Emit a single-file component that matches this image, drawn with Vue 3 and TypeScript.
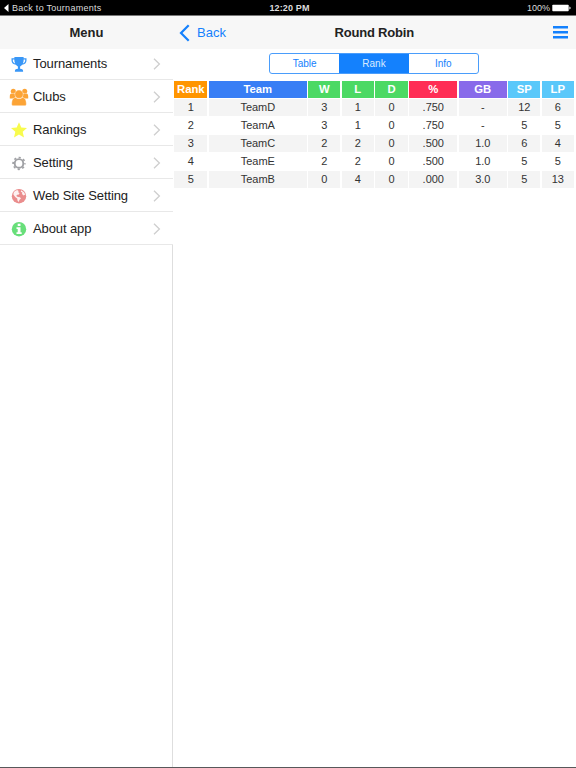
<script setup lang="ts">
interface MenuItem {
  icon: string
  label: string
}

const menu: MenuItem[] = [
  { icon: 'trophy', label: 'Tournaments' },
  { icon: 'clubs', label: 'Clubs' },
  { icon: 'star', label: 'Rankings' },
  { icon: 'gear', label: 'Setting' },
  { icon: 'globe', label: 'Web Site Setting' },
  { icon: 'info', label: 'About app' },
]

const tabs: string[] = ['Table', 'Rank', 'Info']
const activeTab = 'Rank'

const columns: { label: string; tone: string }[] = [
  { label: 'Rank', tone: 'orange' },
  { label: 'Team', tone: 'blue' },
  { label: 'W', tone: 'green' },
  { label: 'L', tone: 'green' },
  { label: 'D', tone: 'green' },
  { label: '%', tone: 'red' },
  { label: 'GB', tone: 'purple' },
  { label: 'SP', tone: 'sky' },
  { label: 'LP', tone: 'sky' },
]

const rows: string[][] = [
  ['1', 'TeamD', '3', '1', '0', '.750', '-', '12', '6'],
  ['2', 'TeamA', '3', '1', '0', '.750', '-', '5', '5'],
  ['3', 'TeamC', '2', '2', '0', '.500', '1.0', '6', '4'],
  ['4', 'TeamE', '2', '2', '0', '.500', '1.0', '5', '5'],
  ['5', 'TeamB', '0', '4', '0', '.000', '3.0', '5', '13'],
]
</script>

<template>
  <div class="screen">
    <header class="status">
      <div class="status-left">
        <svg class="back-mark" viewBox="0 0 5 8"><path d="M4.5 0v8L0 4z" fill="#fff" /></svg>
        <span>Back to Tournaments</span>
      </div>
      <div class="status-time">12:20 PM</div>
      <div class="status-right">
        <span>100%</span>
        <svg class="battery" viewBox="0 0 19 8">
          <rect x="0.3" y="0.8" width="16.4" height="6.4" rx="0.8" fill="#fff" />
          <path d="M17.4 2.6q1.2.3 1.2 1.4t-1.2 1.4z" fill="#fff" />
        </svg>
      </div>
    </header>

    <div class="body">
      <aside class="sidebar">
        <div class="nav nav-menu">Menu</div>
        <ul class="menu">
          <li v-for="item in menu" :key="item.label" class="menu-item">
            <svg v-if="item.icon === 'trophy'" class="icon" viewBox="0 0 20 20">
              <path d="M5.4 3h9.2v1.3h2.9v2.2c0 2.3-1.8 4-4.4 4.3-.6.9-1.3 1.4-2 1.7v2.2c1.8 0 3 .8 3 2.4v.6H5.9v-.6c0-1.6 1.2-2.4 3-2.4v-2.2c-.7-.3-1.4-.8-2-1.7C4.300 10.500 2.500 8.800 2.500 6.500V4.300h2.900z" fill="#3997f7" />
              <path d="M5.300 5.500H3.800v1c0 1.300.9 2.500 2.300 2.900-.5-1.100-.8-2.400-.8-3.900zM14.700 5.500h1.500v1c0 1.300-.9 2.500-2.300 2.900.5-1.100.8-2.400.8-3.900z" fill="#fff" />
            </svg>
            <svg v-else-if="item.icon === 'clubs'" class="icon" viewBox="0 0 20 20">
              <g fill="#fca436">
                <circle cx="4.300" cy="4.200" r="2.500" />
                <circle cx="15.700" cy="4.200" r="2.500" />
                <path d="M.8 11.400V9.200C.8 7.600 1.500 6.800 2.600 6.500q1.700 1 3.200.2l1 3.300-1.400 1.400z" />
                <path d="M19.200 11.400V9.200c0-1.600-.7-2.400-1.800-2.700q-1.700 1-3.200.2l-1 3.300 1.400 1.400z" />
              </g>
              <g fill="#fca436" stroke="#fff" stroke-width=".4">
                <path d="M3.600 18.700c-1-.5-1-1.400-.9-2.700.1-3 1.200-5.100 3.600-5.600q3.700 2.700 7.400 0c2.400.5 3.500 2.600 3.600 5.600.1 1.300.1 2.200-.9 2.700z" />
                <circle cx="10" cy="7.200" r="4.200" />
              </g>
            </svg>
            <svg v-else-if="item.icon === 'star'" class="icon" viewBox="0 0 20 20">
              <path d="M10 2.200l2.300 5.300 5.700.5-4.300 3.800 1.300 5.700-5-3-5 3 1.300-5.700L2 8l5.700-.5z" fill="#f8fb4d" />
            </svg>
            <svg v-else-if="item.icon === 'gear'" class="icon" viewBox="0 0 20 20">
              <circle cx="10" cy="10.400" r="4.300" fill="none" stroke="#a0a1a5" stroke-width="1.900" />
              <circle cx="10" cy="10.400" r="5.900" fill="none" stroke="#a0a1a5" stroke-width="1.700" stroke-dasharray="2.200 2.434" stroke-dashoffset="1.100" />
            </svg>
            <svg v-else-if="item.icon === 'globe'" class="icon" viewBox="0 0 20 20">
              <circle cx="10" cy="10.200" r="7.200" fill="#ea8d8d" />
              <path d="M6 5l2.200-.9 1.400 1-.4 1.200 1.300.8-.6 1.300-1.700.3-1 1.200 1.800 1 2 .3 1 1.200-1.500 1.400-.8 2.200-1.100-1.200-.4-2.200-2-1.600-1.800-2.500.3-1.900zM12.100 4.300l2.900 1.900 1.200 2.300-1.600 1-1.600-1.500.3-1.500-1.500-.8z" fill="#fff" opacity=".88" />
            </svg>
            <svg v-else class="icon" viewBox="0 0 20 20">
              <circle cx="10" cy="10.200" r="7.200" fill="#68df7a" />
              <path d="M8.700 4.700h2.800V7H8.700zM7.500 8.300h4v4.900h1.200v1.700H7.500v-1.700h1.200V10H7.500z" fill="#fff" />
            </svg>
            <span class="menu-label">{{ item.label }}</span>
            <svg class="chevron" viewBox="0 0 8 12"><path d="M1 .8L6.400 6 1 11.200" fill="none" stroke="#cecece" stroke-width="1.300" /></svg>
          </li>
        </ul>
        <div class="sidebar-rest"></div>
      </aside>

      <main class="content">
        <div class="nav nav-main">
          <div class="back">
            <svg class="back-arrow" viewBox="0 0 11 18"><path d="M9.700 1.200L2 9l7.700 7.800" fill="none" stroke="#1481fd" stroke-width="2.200" /></svg>
            <span>Back</span>
          </div>
          <div class="title">Round Robin</div>
          <div class="nav-right">
            <svg class="burger" viewBox="0 0 15 13"><path d="M0 0h15v2.500H0zM0 5h15v2.500H0zM0 10h15v2.500H0z" fill="#1481fd" /></svg>
          </div>
        </div>
        <div class="segmented">
          <div v-for="tab in tabs" :key="tab" class="segment" :class="{ active: tab === activeTab }">{{ tab }}</div>
        </div>
        <div class="grid">
          <div v-for="col in columns" :key="col.label" class="head" :class="col.tone">{{ col.label }}</div>
          <template v-for="(row, r) in rows" :key="r">
            <div v-for="(cell, c) in row" :key="c" class="cell" :class="{ shaded: r % 2 === 0 }">{{ cell }}</div>
          </template>
        </div>
      </main>
    </div>
  </div>
</template>

<style>
body {
  background: #fff;
}
</style>

<style scoped>
.screen {
  box-sizing: border-box;
  width: 576px;
  height: 768px;
  display: flex;
  flex-direction: column;
  overflow: hidden;
  background: #fff;
  border-bottom: 1px solid #58585a;
  font-family: "Liberation Sans", Arial, sans-serif;
  color: #222;
}
.status {
  flex: none;
  display: grid;
  grid-template-columns: 1fr auto 1fr;
  align-items: center;
  height: 15px;
  padding: 0 5px 0 4px;
  border-bottom: 1px solid #777;
  background: #000;
  color: #ddd;
  font-size: 9px;
  line-height: 15px;
}
.status-left {
  display: flex;
  align-items: center;
  gap: 3px;
  letter-spacing: 0.27px;
}
.back-mark {
  width: 5px;
  height: 8px;
}
.status-time {
  font-weight: bold;
  letter-spacing: 0.15px;
  padding: 1px 0 0 4px;
}
.status-right {
  display: flex;
  justify-content: flex-end;
  align-items: center;
  gap: 2px;
}
.battery {
  width: 19px;
  height: 8px;
}
.body {
  flex: 1;
  display: flex;
  min-height: 0;
}
.sidebar {
  width: 173px;
  display: flex;
  flex-direction: column;
}
.nav {
  flex: none;
  height: 33px;
  background: #f7f7f7;
  font-size: 13px;
  line-height: 33px;
}
.nav-menu {
  text-align: center;
  font-weight: bold;
}
.menu {
  list-style: none;
  margin: 0;
  padding: 0;
}
.menu-item {
  box-sizing: border-box;
  display: flex;
  align-items: center;
  height: 33px;
  padding: 2px 12px 0 9px;
  border-bottom: 1px solid #e8e8e8;
}
.menu-item:first-child {
  height: 31px;
  padding-top: 0;
}
.icon {
  width: 20px;
  height: 20px;
}
.menu-label {
  flex: 1;
  margin-left: 4px;
  font-size: 13px;
  line-height: 20px;
  letter-spacing: -0.1px;
}
.chevron {
  width: 8px;
  height: 12px;
}
.sidebar-rest {
  flex: 1;
  border-right: 1px solid #dedede;
}
.content {
  flex: 1;
  display: flex;
  flex-direction: column;
}
.nav-main {
  display: grid;
  grid-template-columns: 1fr auto 1fr;
  padding: 0 8.5px 0 6px;
}
.back {
  display: flex;
  align-items: center;
  gap: 7px;
  color: #1481fd;
}
.back-arrow {
  width: 11px;
  height: 18px;
}
.title {
  font-weight: bold;
  letter-spacing: -0.2px;
  padding-left: 2px;
}
.nav-right {
  display: flex;
  justify-content: flex-end;
  align-items: center;
}
.burger {
  width: 15px;
  height: 13px;
}
.segmented {
  box-sizing: border-box;
  display: flex;
  width: 210px;
  height: 21px;
  margin: 4px 0 0 96px;
  border: 1px solid #4a9dfb;
  border-radius: 3px;
  overflow: hidden;
}
.segment {
  flex: 1;
  text-align: center;
  font-size: 10px;
  line-height: 20px;
  color: #1481fd;
}
.segment.active {
  background: #1481fd;
  color: #d9ebff;
}
.grid {
  display: grid;
  grid-template-columns: 33px 98px 32px 32px 32.5px 48px 48px 32px 32px;
  grid-auto-rows: 17px;
  column-gap: 1.5px;
  row-gap: 1px;
  margin: 7px 0 0 1.3px;
  text-align: center;
  font-size: 11px;
  line-height: 17px;
}
.head {
  color: #fff;
  font-weight: bold;
  font-size: 11.3px;
}
.cell {
  color: #333;
}
.shaded {
  background: #f4f4f4;
}
.orange {
  background: #ff9500;
}
.blue {
  background: #387ef5;
}
.green {
  background: #4cd964;
}
.red {
  background: #ff2d55;
}
.purple {
  background: #886aea;
}
.sky {
  background: #5ac8fa;
}
</style>
